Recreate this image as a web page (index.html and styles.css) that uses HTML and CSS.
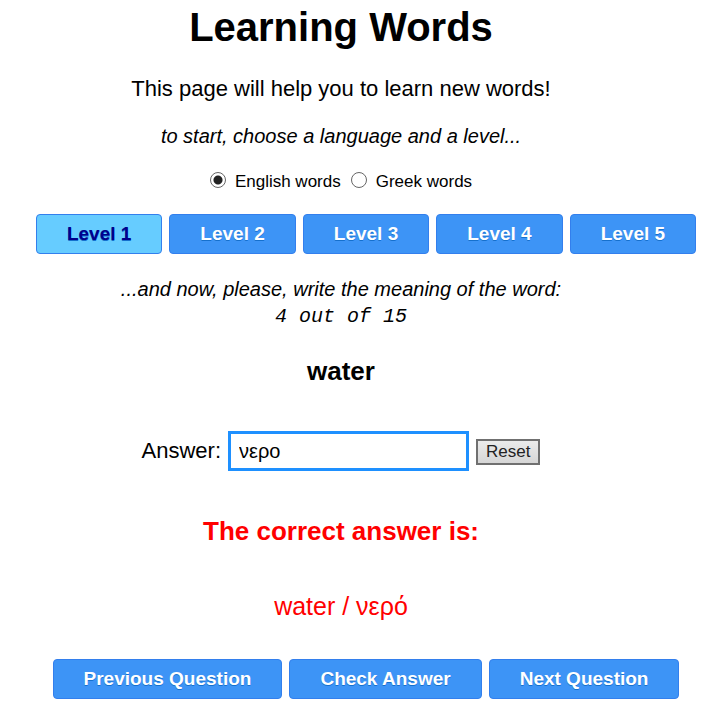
FILE: index.html
```html
<!DOCTYPE html>
<html lang="en">
<head>
<meta charset="utf-8">
<title>Learning Words</title>
<link rel="stylesheet" href="styles.css">
</head>
<body>
<main class="page">
  <h1 class="title">Learning Words</h1>
  <p class="intro">This page will help you to learn new words!</p>
  <p class="hint">to start, choose a language and a level...</p>
  <div class="languages">
    <input class="radio" type="radio" name="language" id="english" checked>
    <label for="english">English words</label>
    <input class="radio" type="radio" name="language" id="greek">
    <label for="greek">Greek words</label>
  </div>
  <div class="levels">
    <button class="btn active" type="button">Level 1</button>
    <button class="btn" type="button">Level 2</button>
    <button class="btn" type="button">Level 3</button>
    <button class="btn" type="button">Level 4</button>
    <button class="btn" type="button">Level 5</button>
  </div>
  <p class="hint prompt">...and now, please, write the meaning of the word:</p>
  <p class="counter">4 out of 15</p>
  <h2 class="word">water</h2>
  <form class="answer">
    <label for="answer">Answer:</label>
    <input class="field" type="text" id="answer" value="νερο">
    <button class="reset" type="button">Reset</button>
  </form>
  <h2 class="result">The correct answer is:</h2>
  <p class="solution">water / νερό</p>
  <div class="actions">
    <button class="btn" type="button">Previous Question</button>
    <button class="btn" type="button">Check Answer</button>
    <button class="btn" type="button">Next Question</button>
  </div>
</main>
</body>
</html>
```
FILE: styles.css
```css
* { box-sizing: border-box; }

body {
  margin: 0;
  background: #fff;
  color: #000;
  font-family: "Liberation Sans", Arial, sans-serif;
}

.page {
  display: flex;
  flex-direction: column;
  align-items: center;
  padding: 4px 40px 20px 0;
}

.title, .intro, .hint, .counter, .word, .result, .solution { margin: 0; }

.title { font-size: 40px; line-height: 46px; }
.intro { margin-top: 25px; font-size: 22px; line-height: 28px; }
.hint { margin-top: 21px; font-size: 20px; line-height: 24px; font-style: italic; }

.languages {
  display: flex;
  align-items: center;
  margin-top: 22px;
  font-size: 17px;
  line-height: 24px;
}

.radio {
  appearance: none;
  width: 16px;
  height: 16px;
  margin: 0 9px 4px 10px;
  border: 1px solid #666;
  border-radius: 50%;
  background: #fff;
}

.radio:first-child { margin-left: 0; }
.radio:checked { background: radial-gradient(circle, #222 0 4px, #fff 5px); }

.levels, .actions {
  display: flex;
  justify-content: center;
  gap: 7px;
}

.levels, .actions { margin: 20px 0 0 50px; }
.actions { margin-top: 39px; }

.btn {
  padding: 0 30px;
  height: 40px;
  border: 1px solid #337fed;
  border-radius: 4px;
  background: #3d94f6;
  color: #fff;
  font: bold 19px "Liberation Sans", Arial, sans-serif;
  text-shadow: 0 1px 0 #1570cd;
  white-space: nowrap;
}

.active { background: #66ccff; color: #00008b; }

.prompt { margin-top: 23px; }

.counter {
  margin-top: 4px;
  font: italic 20px/24px "Liberation Mono", "Courier New", monospace;
}

.word, .result { font-size: 26px; line-height: 30px; }
.word { margin-top: 27px; }

.answer {
  display: flex;
  align-items: center;
  gap: 7px;
  margin-top: 45px;
  font-size: 22px;
}

.field {
  width: 241px;
  height: 40px;
  padding: 0 8px;
  border: 3px solid #1e90ff;
  border-radius: 0;
  background: #fff;
  color: #000;
  font: 20px "Liberation Sans", Arial, sans-serif;
}

.reset {
  height: 26px;
  margin-top: 2px;
  padding: 0 8px;
  border: 2px solid #707070;
  background: linear-gradient(#ebebeb, #d6d6d6);
  color: #222;
  font: 17px "Liberation Sans", Arial, sans-serif;
}

.result { margin-top: 45px; color: #f00; }
.solution { margin-top: 46px; color: #f00; font-size: 25px; line-height: 28px; }
```
